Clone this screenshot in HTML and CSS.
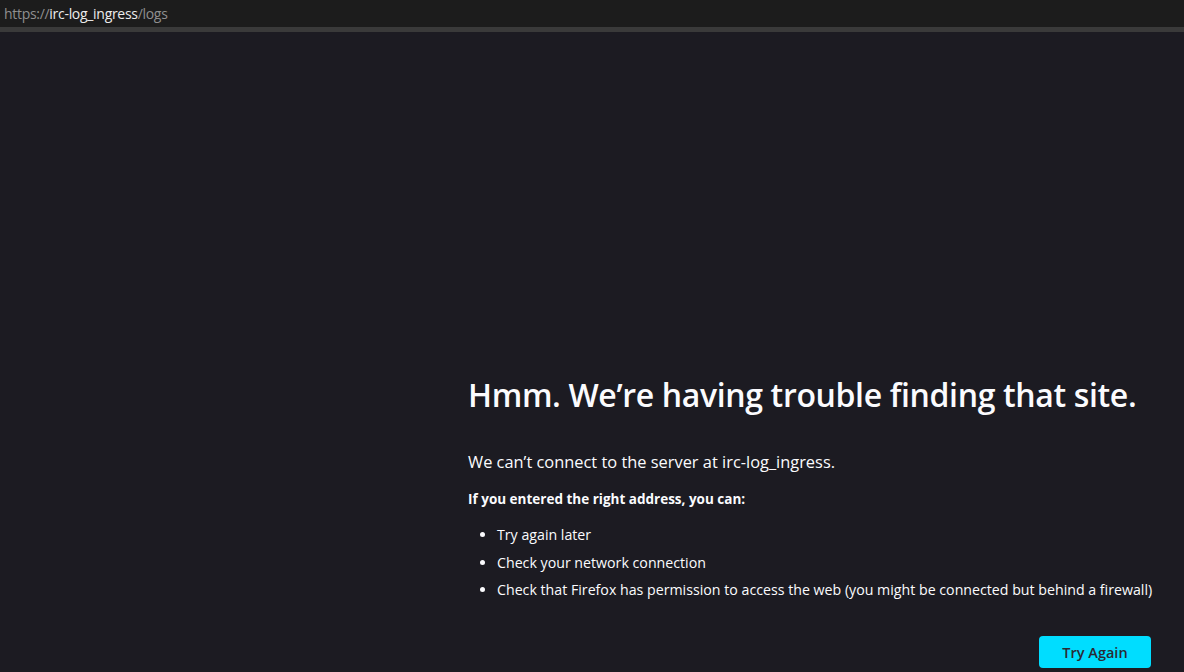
FILE: index.html
```html
<!DOCTYPE html>
<html lang="en">
<head>
<meta charset="utf-8">
<title>Server Not Found</title>
<link rel="stylesheet" href="styles.css">
</head>
<body>
<header class="urlbar">
  <span class="url"><span class="dim">https://</span><span class="host">irc-log_ingress</span><span class="dim">/logs</span></span>
</header>
<div class="strip"></div>
<main class="page">
  <section class="error">
    <h1 class="title">Hmm. We’re having trouble finding that site.</h1>
    <p class="lead">We can’t connect to the server at irc-log_ingress.</p>
    <p class="sub">If you entered the right address, you can:</p>
    <ul class="tips">
      <li>Try again later</li>
      <li>Check your network connection</li>
      <li>Check that Firefox has permission to access the web (you might be connected but behind a firewall)</li>
    </ul>
    <div class="actions">
      <button class="retry">Try Again</button>
    </div>
  </section>
</main>
</body>
</html>
```
FILE: styles.css
```css
html, body {
  margin: 0;
  padding: 0;
  height: 100%;
  background: #1c1b22;
  overflow: hidden;
}
body {
  display: flex;
  flex-direction: column;
  font-family: "Open Sans", "Noto Sans", sans-serif;
  color: #fbfbfe;
}
.urlbar {
  height: 27px;
  background: #1c1c1c;
  display: flex;
  align-items: center;
  padding-left: 4px;
  font-size: 14px;
  flex: none;
}
.url { letter-spacing: -0.3px; }
.dim { color: #8f8f8f; }
.host { color: #ececec; }
.strip {
  height: 5px;
  background: #3a3a3a;
  flex: none;
}
.page {
  flex: 1;
  display: flex;
  padding-left: 468px;
  padding-top: 341px;
}
.error {
  width: 700px;
}
.title {
  margin: 0;
  font-size: 32px;
  font-weight: 600;
  letter-spacing: -0.35px;
  line-height: 44px;
}
.lead {
  margin: 33px 0 0;
  font-size: 16.4px;
  line-height: 24px;
}
.sub {
  margin: 15px 0 0;
  font-size: 13.5px;
  font-weight: 700;
  line-height: 20px;
}
.tips {
  margin: 16px 0 0;
  padding-left: 29px;
  font-size: 14.2px;
  line-height: 20px;
}
.tips li { margin-bottom: 7.5px; }
.actions {
  display: flex;
  justify-content: flex-end;
  margin-top: 36px;
  width: 683px;
}
.retry {
  width: 112px;
  height: 32px;
  border: none;
  border-radius: 4px;
  background: #00ddff;
  color: #2b2a33;
  font-family: inherit;
  font-size: 14.5px;
  font-weight: 600;
}
```
